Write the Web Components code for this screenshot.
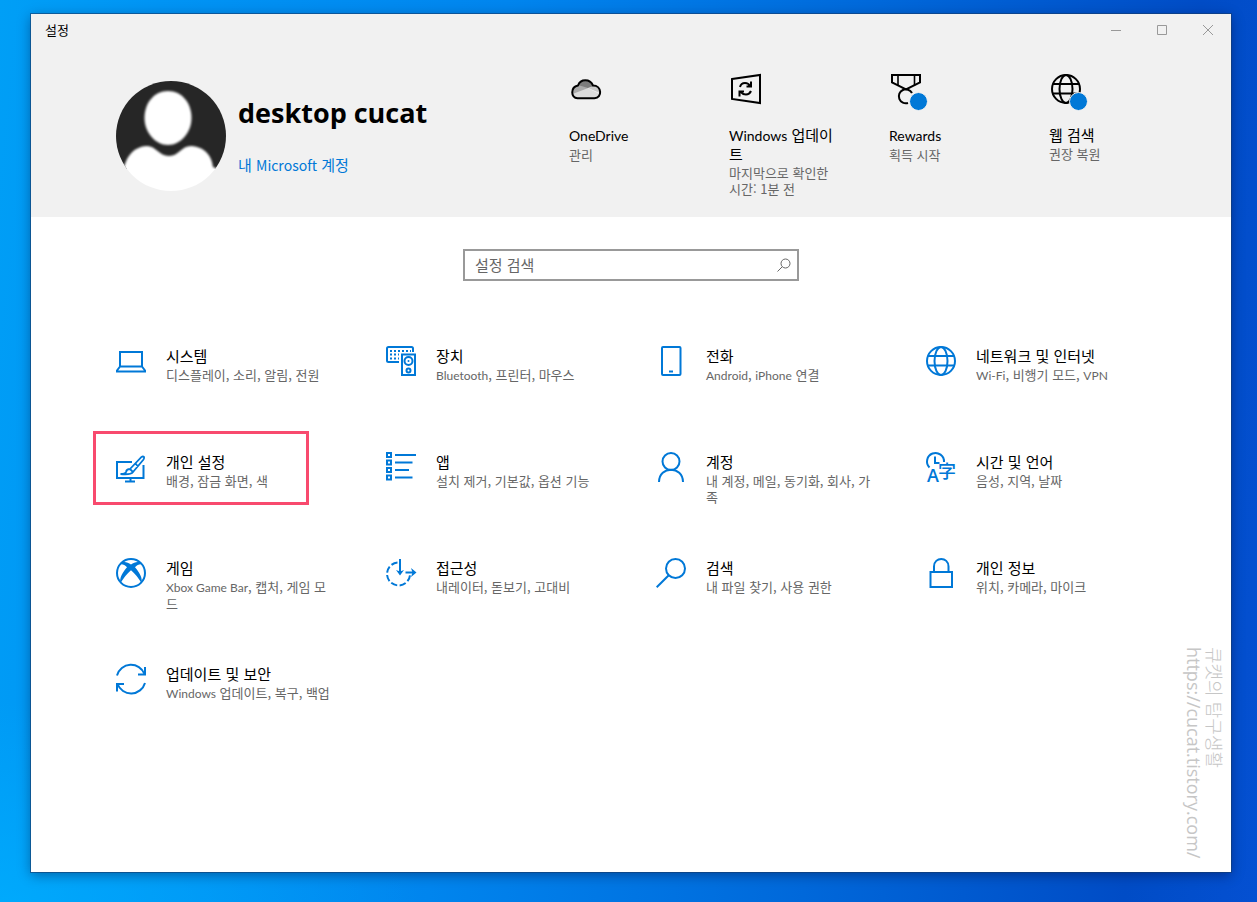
<!DOCTYPE html>
<html lang="ko">
<head>
<meta charset="utf-8">
<meta name="viewport" content="width=device-width, initial-scale=1">
<title>설정</title>
<style>
  :root {
    --accent: #0078d7;
    --muted: #666;
    --chrome: #f1f1f1;
    --mark: #f84a6e;
    --latin: Lato, "Open Sans", sans-serif;
  }
  html, body { margin: 0; min-height: 100%; }
  body {
    font: 15px/18px "Noto Sans CJK KR", "Open Sans", sans-serif;
    color: #000;
    min-height: 100vh;
    display: flex;
    background:
      radial-gradient(ellipse 420px 200px at 0% 100%, rgba(0,176,255,.7), rgba(0,176,255,0)),
      linear-gradient(95deg, #009ff6 0%, #0094f4 12%, #0085ee 38%, #0068da 66%, #004cc6 90%, #0450d2 100%);
  }
</style>
</head>
<body>
<settings-window></settings-window>

<template id="tpl-window">
  <style>
    :host { display: flex; flex: 1; padding: 14px 26px 30px 31px; box-sizing: border-box; min-width: 0; }
    .frame {
      flex: 1; min-width: 0; display: flex; flex-direction: column; position: relative; background: #fff;
      box-shadow: 0 0 0 1px rgba(20,60,110,.6), 0 3px 12px rgba(0,0,40,.4);
    }
    .top { background: var(--chrome); }
    main { flex: 1; padding: 32px 60px; }
    .grid {
      display: grid; grid-template-columns: repeat(auto-fill, 270px); grid-auto-rows: minmax(106px, auto);
      justify-content: center; margin-top: 57px;
    }
    .tiles { display: flex; flex-wrap: wrap; }
    .en { font-size: 14px; }
  </style>
  <div class="frame">
    <div class="top">
      <title-bar>설정</title-bar>
      <account-header>
        <span slot="name">desktop cucat</span>
        <span slot="link">내 <span class="en">Microsoft</span> 계정</span>
        <div class="tiles">
          <status-tile icon="cloud" label="OneDrive" note="관리"></status-tile>
          <status-tile icon="winupdate" label="Windows 업데이트" note="마지막으로 확인한 시간: 1분 전"></status-tile>
          <status-tile icon="medal" label="Rewards" note="획득 시작" badge></status-tile>
          <status-tile icon="globe" label="웹 검색" note="권장 복원" badge></status-tile>
        </div>
      </account-header>
    </div>
    <main>
      <search-box placeholder="설정 검색"></search-box>
      <nav class="grid">
        <setting-item icon="laptop" label="시스템" note="디스플레이, 소리, 알림, 전원"></setting-item>
        <setting-item icon="devices" label="장치" note="Bluetooth, 프린터, 마우스"></setting-item>
        <setting-item icon="phone" label="전화" note="Android, iPhone 연결"></setting-item>
        <setting-item icon="globe" label="네트워크 및 인터넷" note="Wi-Fi, 비행기 모드, VPN"></setting-item>
        <setting-item icon="personal" label="개인 설정" note="배경, 잠금 화면, 색" marked></setting-item>
        <setting-item icon="apps" label="앱" note="설치 제거, 기본값, 옵션 기능"></setting-item>
        <setting-item icon="user" label="계정" note="내 계정, 메일, 동기화, 회사, 가족"></setting-item>
        <setting-item icon="timelang" label="시간 및 언어" note="음성, 지역, 날짜"></setting-item>
        <setting-item icon="xbox" label="게임" note="Xbox Game Bar, 캡처, 게임 모드"></setting-item>
        <setting-item icon="access" label="접근성" note="내레이터, 돋보기, 고대비"></setting-item>
        <setting-item icon="search" label="검색" note="내 파일 찾기, 사용 권한"></setting-item>
        <setting-item icon="lock" label="개인 정보" note="위치, 카메라, 마이크"></setting-item>
        <setting-item icon="update" label="업데이트 및 보안" note="Windows 업데이트, 복구, 백업"></setting-item>
      </nav>
    </main>
    <water-mark><span>큐캣의 탐구생활</span><span slot="url">https://cucat.tistory.com/</span></water-mark>
  </div>
</template>

<template id="tpl-titlebar">
  <style>
    :host { display: flex; height: 32px; justify-content: space-between; font-size: 13px; }
    .title { padding: 7px 14px; }
    .buttons { display: flex; }
    button { width: 46px; border: 0; padding: 0; background: none; color: #999; display: grid; place-items: center; }
    svg { display: block; }
  </style>
  <div class="title"><slot></slot></div>
  <div class="buttons">
    <button aria-label="최소화"><svg width="10" height="10" fill="none" stroke="currentColor"><path d="M0 5.5H10"/></svg></button>
    <button aria-label="최대화"><svg width="10" height="10" fill="none" stroke="currentColor"><path d="M.5.5H9.500V9.500H.5z"/></svg></button>
    <button aria-label="닫기"><svg width="10" height="10" fill="none" stroke="currentColor"><path d="M0 0L10 10M10 0L0 10"/></svg></button>
  </div>
</template>

<template id="tpl-account">
  <style>
    :host { display: flex; min-height: 171px; box-sizing: border-box; padding: 28px 22px 0 85px; align-items: flex-start; }
    .me { display: flex; flex: 1; gap: 12px; padding-top: 7px; }
    .me > svg { flex: none; }
    .who { padding-top: 14px; }
    h1 { margin: 0 0 24px; font: 700 27px/36px "Open Sans", "Noto Sans CJK KR", sans-serif; white-space: nowrap; }
    a { color: var(--accent); text-decoration: none; display: block; line-height: 20px; white-space: nowrap; }
  </style>
  <div class="me">
    <svg width="110" height="110" viewBox="0 0 110 110" aria-hidden="true">
      <defs>
        <clipPath id="disc"><circle cx="55" cy="55" r="55"/></clipPath>
        <filter id="soft"><feGaussianBlur stdDeviation="1"/></filter>
      </defs>
      <g clip-path="url(#disc)">
        <rect width="110" height="88" fill="#262626"/>
        <g fill="#fff" filter="url(#soft)">
          <path d="M52 10C66 10 75.500 22 75.500 37C75.500 51 65 64 52 64C39 64 28.500 51 28.500 37C28.500 22 38 10 52 10z"/>
          <path d="M7 90C10 78 15 66 31 65C40 65 43 75 53 75C63 75 65 65 75 65C90 66 96 76 97 86L112 92V120H0z"/>
        </g>
      </g>
    </svg>
    <div class="who"><h1><slot name="name"></slot></h1><a href="#account"><slot name="link"></slot></a></div>
  </div>
  <slot></slot>
</template>

<template id="tpl-tile">
  <style>
    :host { display: block; width: 160px; box-sizing: border-box; padding-right: 50px; }
    a { color: inherit; text-decoration: none; display: block; }
    .pic { position: relative; width: 30px; height: 30px; margin: 0 0 22px 2px; }
    .dot { position: absolute; left: 18px; top: 18px; width: 17px; height: 17px; border: 1px solid var(--chrome); border-radius: 50%; background: var(--accent); }
    .note { color: var(--muted); font-size: 13px; line-height: 16px; margin-top: 2px; }
    .label .en { font-family: var(--latin); font-size: 14px; }
    .note .en { font-family: var(--latin); font-size: 12px; }
  </style>
  <a><div class="pic"><app-icon></app-icon></div><div class="label"></div><div class="note"></div></a>
</template>

<template id="tpl-item">
  <style>
    :host { display: block; position: relative; }
    a { display: flex; gap: 20px; padding: 8px 25px; color: inherit; text-decoration: none; }
    app-icon { color: var(--accent); flex: none; }
    .label { line-height: 20px; }
    .note { color: var(--muted); font-size: 13px; line-height: 16px; margin-top: 1px; }
    .note .en { font-family: var(--latin); font-size: 12px; }
    :host([marked])::after {
      content: ""; position: absolute; left: 2px; top: -13px; width: 216px; height: 74px;
      box-sizing: border-box; border: 3px solid var(--mark); pointer-events: none;
    }
  </style>
  <a><app-icon></app-icon><div><div class="label"></div><div class="note"></div></div></a>
</template>

<template id="tpl-search">
  <style>
    :host { display: flex; align-items: center; box-sizing: border-box; max-width: 336px; height: 32px; margin: 0 auto; border: 2px solid #999; padding: 0 6px 0 10px; }
    input { flex: 1; min-width: 0; border: 0; outline: 0; padding: 0; background: none; font: inherit; }
    input::placeholder { color: #666; opacity: 1; }
    button { border: 0; padding: 0; background: none; color: #666; display: block; }
    svg { display: block; }
  </style>
  <input type="search">
  <button aria-label="검색"><svg width="14" height="14" fill="none" stroke="currentColor"><circle cx="8.500" cy="5.500" r="4.500"/><path d="M5.200 8.800L.5 13.500"/></svg></button>
</template>

<template id="tpl-watermark">
  <style>
    :host {
      position: absolute; right: 6px; bottom: 18px; height: 207px; display: block;
      writing-mode: vertical-rl; text-orientation: sideways; color: #c6c6c6; font-size: 18px; line-height: 21px; font-weight: 300; white-space: nowrap;
    }
    div + div { font-family: "Open Sans", sans-serif; font-weight: 400; }
  </style>
  <div><slot></slot></div><div><slot name="url"></slot></div>
</template>

<script>
const stamp = (host, id) => {
  const root = host.attachShadow({ mode: "open" });
  root.append(document.getElementById(id).content.cloneNode(true));
  return root;
};

const GLYPHS = {
  laptop: '<path d="M4 6H26V20.500H4zM4 20.500L1 24.500V25.500H29V24.500L26 20.500"/>',
  devices: '<path d="M13 16H2.500Q1 16 1 14.500V2.500Q1 1 2.500 1H25.500Q27 1 27 2.500V6" /><path stroke-dasharray="2 2" d="M4 5H25M4 8.500H13M4 12.500H13"/><path d="M16 8.500H29V29H16z"/><circle cx="22.500" cy="15" r="4"/><circle cx="22.500" cy="24.500" r="2"/><circle cx="22.500" cy="15" r="1" fill="currentColor" stroke="none"/>',
  phone: '<rect x="6" y="1" width="18.500" height="28" rx="1"/><path d="M13 25.500H17"/>',
  globe: '<circle cx="15" cy="15" r="14"/><ellipse cx="15" cy="15" rx="6.500" ry="14"/><path d="M2 10H28M2 19.500H28"/>',
  personal: '<path d="M16 10H1V26H27.500V13M14.500 26V29.500M9 29.500H19"/><path stroke-width="1.800" d="M14 17L25.500 5Q27 4 28 5Q28.500 6 27.500 7.500L17 20M14 17Q10.500 17 10 20Q9.500 22 4.500 22Q15 23 17 20z M19.500 11.500L22 14.500"/>',
  apps: '<path d="M1 1H5V5H1zM1 8.500H5V12.500H1zM1 16H5V20H1zM1 23.500H5V27.500H1zM9 3H30M9 10.500H26.500M9 18H23M9 25.500H26.500"/>',
  user: '<circle cx="15" cy="9.500" r="8.500"/><path d="M3 30C3 13.500 27 13.500 27 30"/>',
  timelang: '<path d="M3.500 15.500A8.500 8.500 0 1 1 18 10M9 4.500V11H13.500"/><text x="1" y="30" font-family="Open Sans" font-size="18" font-weight="600" fill="currentColor" stroke="none">A</text><text x="12" y="26" font-family="Noto Sans CJK KR" font-size="18" font-weight="500" fill="currentColor" stroke="none">字</text>',
  xbox: '<circle cx="15" cy="15" r="14"/><path fill="currentColor" stroke="none" d="M6 4.500C9 3.500 12 4.500 15 6.500C18 4.500 21 3.500 24 4.500L26 6.500C24 5.700 21 7 19 9.200C23 14 27 20 25.500 25C22.500 20 19 15.500 15 12.200C11 15.500 7.500 20 4.500 25C3 20 7 14 11 9.200C9 7 6 5.700 4 6.500z"/>',
  access: '<path stroke-dasharray="6.500 2.500" d="M11.500 4.500A11.500 11.500 0 1 0 24 17"/><path d="M14 1V15M19.500 14.500H28"/><path fill="currentColor" stroke="none" d="M10 12L14 13.500L18 12L14 17.500zM25 10L30.500 14.500L25 19L26.500 14.500z"/>',
  search: '<circle cx="19.500" cy="10.500" r="9.500"/><path d="M12.500 17.500L.7 29.300"/>',
  lock: '<path d="M4.500 14H26V29H4.500zM8 14V8.500C8 -1.500 22.500 -1.500 22.500 8.500V14"/>',
  update: '<path d="M1 11.500A14.500 14.500 0 0 1 28.500 10M29 19A14.500 14.500 0 0 1 1.500 20"/><path d="M29 3V10.500H22M1 27.500V20H8"/>',
  cloud: '<path fill="#dcdcdc" stroke="none" d="M1 18L16 14L29 20Q28 24 24 24H6Q2 23 1 18z"/><path fill="#aaa" stroke="none" d="M1.500 20Q0 13 7 11Q12 3 20 8L23 12L16 14.500z"/><path fill="#7c7c7c" stroke="none" d="M7 11Q12 3 20 8L23 12L17 14z"/><path fill="#c8c8c8" stroke="none" d="M17 14L23 12Q29 13 29 19z"/><path d="M6.500 24.200C-.5 24 -.7 13 7 11.500C9.500 4.500 19 4.500 22 11.500C31 11.500 31.500 24 23.500 24.200z"/>',
  winupdate: '<path d="M1 5L29 1V29L1 25z"/><path stroke-width="2" d="M9 13Q10 9 14 9Q17.500 9 19 12M20 17Q18.500 20.500 15 20.500Q11.500 20.500 9.500 18M20 7.500V12.500H15.500M8.500 22.500V17.500H13"/>',
  medal: '<path d="M1 1H29V8.500L15 15.500L1 8.500z"/><path stroke-width="1.600" d="M7 1V11.500M23.500 1V11.500"/><path d="M17 29A7 7 0 1 1 21 19"/>'
};

// Splits mixed text so that Latin words can take their own face and size beside Hangul.
const setMixed = (box, text) => {
  for (const part of text.split(/([A-Za-z][A-Za-z -]*[A-Za-z])/)) {
    if (/^[A-Za-z]/.test(part)) {
      const span = document.createElement("span");
      span.className = "en";
      span.textContent = part;
      box.append(span);
    } else box.append(part);
  }
};

customElements.define("app-icon", class extends HTMLElement {
  static observedAttributes = ["name"];
  constructor() { super(); this.attachShadow({ mode: "open" }); }
  attributeChangedCallback(_, __, name) {
    this.shadowRoot.innerHTML = `<style>:host{display:block;width:30px;height:30px}svg{display:block;overflow:visible}</style>
      <svg width="30" height="30" viewBox="0 0 30 30" fill="none" stroke="currentColor" stroke-width="2" aria-hidden="true">${GLYPHS[name]}</svg>`;
  }
});

class Entry extends HTMLElement {
  fill(root) {
    const icon = this.getAttribute("icon");
    root.querySelector("a").href = "#" + icon;
    root.querySelector("app-icon").setAttribute("name", icon);
    setMixed(root.querySelector(".label"), this.getAttribute("label"));
    setMixed(root.querySelector(".note"), this.getAttribute("note"));
  }
}
customElements.define("status-tile", class extends Entry {
  connectedCallback() {
    if (this.shadowRoot) return;
    const root = stamp(this, "tpl-tile");
    this.fill(root);
    if (this.hasAttribute("badge")) {
      const dot = document.createElement("span");
      dot.className = "dot";
      root.querySelector(".pic").append(dot);
    }
  }
});
customElements.define("setting-item", class extends Entry {
  connectedCallback() { if (!this.shadowRoot) this.fill(stamp(this, "tpl-item")); }
});
customElements.define("search-box", class extends HTMLElement {
  connectedCallback() {
    if (this.shadowRoot) return;
    const input = stamp(this, "tpl-search").querySelector("input");
    input.placeholder = this.getAttribute("placeholder");
    input.setAttribute("aria-label", input.placeholder);
  }
});
for (const [tag, id] of [["title-bar", "tpl-titlebar"], ["account-header", "tpl-account"], ["water-mark", "tpl-watermark"], ["settings-window", "tpl-window"]]) {
  customElements.define(tag, class extends HTMLElement {
    connectedCallback() { if (!this.shadowRoot) stamp(this, id); }
  });
}
</script>
</body>
</html>
